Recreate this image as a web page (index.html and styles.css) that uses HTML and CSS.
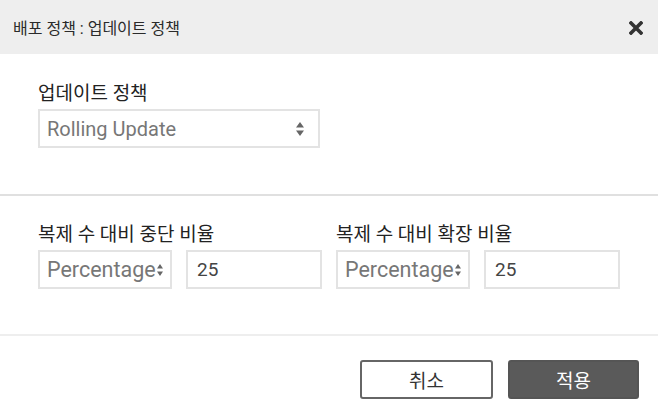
FILE: index.html
```html
<!DOCTYPE html>
<html lang="ko">
<head>
<meta charset="utf-8">
<link rel="stylesheet" href="styles.css">
</head>
<body>
<div class="dialog">
  <div class="header">
    <span class="title">배포 정책 : 업데이트 정책</span>
    <svg class="close" width="14" height="14" viewBox="0 0 14 14"><path d="M2 2 L12 12 M12 2 L2 12" stroke="#333" stroke-width="3.6" stroke-linecap="square"/></svg>
  </div>
  <div class="section first">
    <div class="label">업데이트 정책</div>
    <div class="select wide">
      <span class="val">Rolling Update</span>
      <svg class="arrows" width="8" height="14" viewBox="0 0 8 14"><path d="M4 0 L8 5.5 L0 5.5 Z M0 8.5 L8 8.5 L4 14 Z" fill="#666"/></svg>
    </div>
  </div>
  <div class="divider strong"></div>
  <div class="section second">
    <div class="col">
      <div class="label">복제 수 대비 중단 비율</div>
      <div class="row">
        <div class="select small">
          <span class="val">Percentage</span>
          <svg class="arrows" width="6" height="12" viewBox="0 0 6 12"><path d="M3 0 L6 4.5 L0 4.5 Z M0 7.5 L6 7.5 L3 12 Z" fill="#666"/></svg>
        </div>
        <div class="input">25</div>
      </div>
    </div>
    <div class="col">
      <div class="label">복제 수 대비 확장 비율</div>
      <div class="row">
        <div class="select small">
          <span class="val">Percentage</span>
          <svg class="arrows" width="6" height="12" viewBox="0 0 6 12"><path d="M3 0 L6 4.5 L0 4.5 Z M0 7.5 L6 7.5 L3 12 Z" fill="#666"/></svg>
        </div>
        <div class="input">25</div>
      </div>
    </div>
  </div>
  <div class="divider light"></div>
  <div class="footer">
    <button class="btn cancel">취소</button>
    <button class="btn apply">적용</button>
  </div>
</div>
</body>
</html>
```
FILE: styles.css
```css
* { box-sizing: border-box; }
html, body { margin: 0; padding: 0; background: #fff; }
body { font-family: Roboto, "Noto Sans CJK KR", sans-serif; color: #333; width: 658px; height: 416px; overflow: hidden; }
.dialog { width: 658px; }
.header {
  height: 54px; background: #eeeeee;
  display: flex; align-items: center; justify-content: space-between;
  padding: 0 15px 0 13px;
}
.title { font-size: 16px; color: #2a2a2a; }
.close { display: block; margin-top: 1px; }
.section { padding-left: 38px; }
.section.first { height: 140px; padding-top: 27px; }
.label { font-size: 19px; color: #222; line-height: 26px; }
.select {
  border: 2px solid #e3e3e3; background: #fff;
  display: flex; align-items: center;
  color: #777; font-size: 20px;
}
.select.wide { width: 282px; height: 39px; margin-top: 2px; padding: 0 14px 0 7px; justify-content: space-between; }
.select.small { width: 134px; height: 39px; padding: 0 0 0 7px; white-space: nowrap; font-size: 21.5px; }
.select.small .arrows { margin-left: 1px; flex: none; }
.divider.strong { height: 2px; background: #e0e0e0; }
.divider.light { height: 2px; background: #eeeeee; }
.section.second { height: 138px; padding-top: 26px; display: flex; gap: 14px; }
.col { width: 284px; }
.col .label { margin-bottom: 2px; }
.row { display: flex; gap: 14px; }
.input {
  width: 136px; height: 39px; border: 2px solid #e3e3e3;
  display: flex; align-items: center; padding-left: 9px;
  font-size: 19px; color: #444;
}
.footer { display: flex; justify-content: flex-end; gap: 15px; padding: 24px 19px 0 0; }
.btn {
  width: 133px; height: 39px; border-radius: 3px; padding: 0;
  font-family: "Noto Sans CJK KR", sans-serif; font-size: 19px;
}
.cancel { background: #fff; border: 2px solid #666; color: #333; }
.apply { width: 131px; background: #5a5a5a; border: 2px solid #555; color: #fff; }
```
